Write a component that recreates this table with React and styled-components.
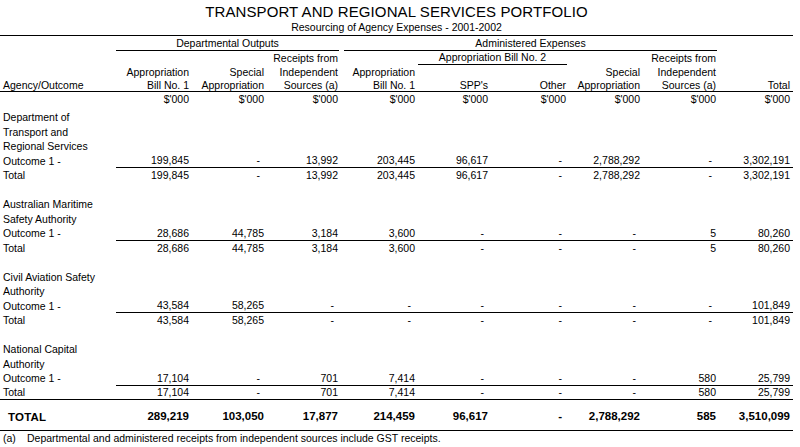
import React from "react"
import styled, { createGlobalStyle } from "styled-components"

const GlobalStyle = createGlobalStyle`
    html, body {
        margin: 0;
        padding: 0;
        background: #fff;
    }
    body {
        font-family: "Liberation Sans", Arial, sans-serif;
        font-size: 10.5px;
        color: #000;
    }
`

const COLS = [116, 76, 75, 74, 77, 73, 78, 74, 76, 74]

const agencies = [
    {
        name: ["Department of", "Transport and", "Regional Services"],
        values: [199845, null, 13992, 203445, 96617, null, 2788292, null, 3302191],
    },
    {
        name: ["Australian Maritime", "Safety Authority"],
        values: [28686, 44785, 3184, 3600, null, null, null, 5, 80260],
    },
    {
        name: ["Civil Aviation Safety", "Authority"],
        values: [43584, 58265, null, null, null, null, null, null, 101849],
    },
    {
        name: ["National Capital", "Authority"],
        values: [17104, null, 701, 7414, null, null, null, 580, 25799],
    },
]

const totals = [289219, 103050, 17877, 214459, 96617, null, 2788292, 585, 3510099]

const fmt = (n) => n.toLocaleString("en-US")

const NumberCell = ({ value, ...rest }) => (
    <Cell align="right" {...rest}>
        {value === null ? <Dash>-</Dash> : fmt(value)}
    </Cell>
)

const App = () => {
    return (
        <>
            <GlobalStyle />
            <Sheet>
                <colgroup>
                    {COLS.map((w, i) => <col key={i} style={{ width: w }} />)}
                </colgroup>
                <thead>
                    <tr>
                        <Title colSpan={10}>TRANSPORT AND REGIONAL SERVICES PORTFOLIO</Title>
                    </tr>
                    <tr>
                        <Subtitle colSpan={10}>Resourcing of Agency Expenses - 2001-2002</Subtitle>
                    </tr>
                    <HeadRow h={15}>
                        <Head />
                        <Group colSpan={3}><Rule>Departmental Outputs</Rule></Group>
                        <Group colSpan={5}><Rule left={3}>Administered Expenses</Rule></Group>
                        <Head />
                    </HeadRow>
                    <HeadRow h={14}>
                        <Head />
                        <Head />
                        <Head />
                        <Head>Receipts from</Head>
                        <Head />
                        <Group colSpan={2}><Rule left={0}>Appropriation Bill No. 2</Rule></Group>
                        <Head />
                        <Head>Receipts from</Head>
                        <Head />
                    </HeadRow>
                    <HeadRow h={14}>
                        <Head />
                        <Head>Appropriation</Head>
                        <Head>Special</Head>
                        <Head>Independent</Head>
                        <Head>Appropriation</Head>
                        <Head />
                        <Head />
                        <Head>Special</Head>
                        <Head>Independent</Head>
                        <Head />
                    </HeadRow>
                    <HeadRow h={12}>
                        <Head align="left">Agency/Outcome</Head>
                        <Head>Bill No. 1</Head>
                        <Head>Appropriation</Head>
                        <Head>Sources (a)</Head>
                        <Head>Bill No. 1</Head>
                        <Head>SPP's</Head>
                        <Head>Other</Head>
                        <Head>Appropriation</Head>
                        <Head>Sources (a)</Head>
                        <Head>Total</Head>
                    </HeadRow>
                    <UnitRow>
                        <Head />
                        {COLS.slice(1).map((_, i) => <Head key={i}>$'000</Head>)}
                    </UnitRow>
                </thead>
                <tbody>
                    {agencies.map((a, ai) => (
                        <React.Fragment key={ai}>
                            {ai > 0 && <Row><Cell colSpan={10} /></Row>}
                            {a.name.map((line, li) => (
                                <Row key={li} first={ai === 0 && li === 0}>
                                    <Cell>{line}</Cell>
                                    <Cell colSpan={9} />
                                </Row>
                            ))}
                            <Row>
                                <Cell>Outcome 1 -</Cell>
                                {a.values.map((v, i) => <NumberCell key={i} value={v} />)}
                            </Row>
                            <Row>
                                <Cell ruled={ai === agencies.length - 1}>Total</Cell>
                                {a.values.map((v, i) => (
                                    <NumberCell key={i} value={v} topRule ruled={ai === agencies.length - 1} />
                                ))}
                            </Row>
                        </React.Fragment>
                    ))}
                    <TotalRow>
                        <TotalLabel>TOTAL</TotalLabel>
                        {totals.map((v, i) => <NumberCell key={i} value={v} />)}
                    </TotalRow>
                    <tr>
                        <Footnote colSpan={10}>
                            <span>(a)</span>Departmental and administered receipts from independent sources include GST receipts.
                        </Footnote>
                    </tr>
                </tbody>
            </Sheet>
        </>
    )
}

export default App

const Sheet = styled.table`
    width: 793px;
    table-layout: fixed;
    border-collapse: collapse;
    border-spacing: 0;
`

const Title = styled.th`
    height: 20px;
    padding: 0;
    font-size: 15px;
    font-weight: normal;
    letter-spacing: 0.1px;
    text-align: center;
    vertical-align: bottom;
    line-height: 17px;
    white-space: nowrap;
`

const Subtitle = styled.th`
    height: 14px;
    padding: 0 0 1px;
    font-weight: normal;
    text-align: center;
    line-height: 13px;
    border-bottom: 1px solid #000;
`

const HeadRow = styled.tr`
    height: ${props => props.h}px;
`

const UnitRow = styled.tr`
    height: 15px;
    border-top: 1px solid #000;
`

const Head = styled.th`
    padding: 0 3px;
    font-weight: normal;
    text-align: ${props => props.align || "right"};
    line-height: 12px;
    white-space: nowrap;
    vertical-align: middle;
`

const Group = styled.th`
    padding: 0;
    font-weight: normal;
    line-height: 12px;
    vertical-align: bottom;
`

const Rule = styled.div`
    margin: 0 2px 0 ${props => props.left ?? 0}px;
    padding-bottom: 1px;
    border-bottom: 1px solid #000;
    text-align: center;
    white-space: nowrap;
`

const Row = styled.tr`
    height: ${props => props.first ? 18 : 14.5}px;
`

const Cell = styled.td`
    padding: 0 3px;
    text-align: ${props => props.align || "left"};
    vertical-align: bottom;
    line-height: 13px;
    white-space: nowrap;
    border-top: ${props => props.topRule ? "1px solid #000" : "none"};
    border-bottom: ${props => props.ruled ? "1px solid #000" : "none"};
`

const Dash = styled.span`
    padding-right: 4px;
`

const TotalRow = styled.tr`
    height: 31px;
    font-weight: bold;
    font-size: 11.5px;
    border-bottom: 1px solid #000;
    td {
        vertical-align: middle;
        padding-top: 3px;
    }
`

const TotalLabel = styled.td`
    padding: 0 0 0 8px;
    letter-spacing: 0.2px;
`

const Footnote = styled.td`
    padding: 1px 3px 0;
    line-height: 13px;
    white-space: nowrap;

    span {
        display: inline-block;
        width: 24px;
    }
`
